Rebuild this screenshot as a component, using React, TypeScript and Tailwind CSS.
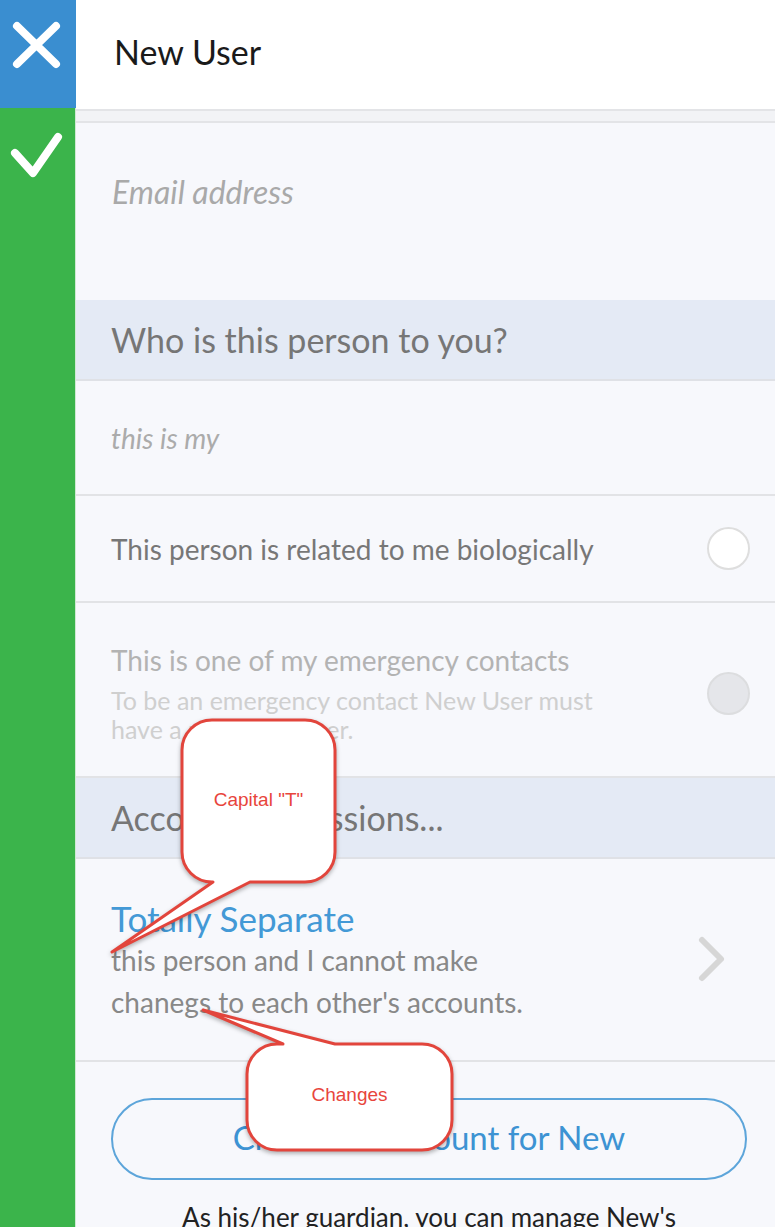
import React from "react";

const SectionHeader = ({ children }: { children: React.ReactNode }) => (
  <div className="h-[81px] bg-[#e4eaf5] border-b-2 border-[#dfe1e6] flex items-center pl-[35px]">
    <h2 className="text-[34px] text-[#767676] leading-none">{children}</h2>
  </div>
);

const Radio = ({ disabled }: { disabled?: boolean }) => (
  <div
    className={
      disabled
        ? "w-[43px] h-[43px] rounded-full bg-[#e5e6ea] border-2 border-[#dcdddf] shrink-0"
        : "w-[43px] h-[43px] rounded-full bg-white border-2 border-[#dedede] shrink-0"
    }
  />
);

const Callouts = () => (
  <>
    <svg
      className="absolute left-0 top-0 pointer-events-none drop-shadow-[0_2px_2px_rgba(0,0,0,0.3)]"
      width="775"
      height="1227"
      viewBox="0 0 775 1227"
    >
      <path
        d="M 212 720 H 305 A 30 30 0 0 1 335 750 V 852 A 30 30 0 0 1 305 882 H 250 L 112 952 L 213 882 H 212 A 30 30 0 0 1 182 852 V 750 A 30 30 0 0 1 212 720 Z"
        fill="#fff"
        stroke="#e2453c"
        strokeWidth="3"
        strokeLinejoin="round"
      />
      <path
        d="M 277 1044 H 283 L 203 1010 L 335 1044 H 422 A 30 30 0 0 1 452 1074 V 1120 A 30 30 0 0 1 422 1150 H 277 A 30 30 0 0 1 247 1120 V 1074 A 30 30 0 0 1 277 1044 Z"
        fill="#fff"
        stroke="#e2453c"
        strokeWidth="3"
        strokeLinejoin="round"
      />
    </svg>
    <div className="absolute left-[182px] top-[788px] w-[153px] text-center text-[19px] leading-[24px] text-[#e8453c] font-['Liberation_Sans',Arial,sans-serif]">
      Capital "T"
    </div>
    <div className="absolute left-[247px] top-[1083px] w-[205px] text-center text-[19px] leading-[24px] text-[#e8453c] font-['Liberation_Sans',Arial,sans-serif]">
      Changes
    </div>
  </>
);

export default function App() {
  return (
    <div className="relative flex w-[775px] h-[1227px] overflow-hidden font-['Lato',sans-serif]">
      <aside className="w-[76px] shrink-0 flex flex-col">
        <div className="h-[108px] bg-[#3a8ed0]">
          <svg width="76" height="108" viewBox="0 0 76 108">
            <path d="M17 26 L56 64 M56 26 L17 64" stroke="#fff" strokeWidth="8" strokeLinecap="round" fill="none" />
          </svg>
        </div>
        <div className="flex-1 bg-[#3bb44b] border-r border-[#cfe9d3]">
          <svg className="mt-[20px]" width="76" height="60" viewBox="0 0 76 60">
            <path d="M15 25 L33 45 L58 9" stroke="#fff" strokeWidth="8" strokeLinecap="round" strokeLinejoin="round" fill="none" />
          </svg>
        </div>
      </aside>

      <main className="flex-1 bg-[#f7f8fc] overflow-hidden">
        <header className="h-[111px] bg-white border-b-2 border-[#e3e4e7] flex items-center pl-[38px] pb-[6px]">
          <h1 className="text-[34px] text-[#1a1a1a] leading-none">New User</h1>
        </header>
        <div className="h-[12px] bg-[#f2f3f6] border-b-2 border-[#e3e4e7]" />

        <div className="h-[177px] pl-[36px] pt-[50px]">
          <p className="text-[32px] italic text-[#a9a9a9] leading-[38px]">Email address</p>
        </div>

        <SectionHeader>Who is this person to you?</SectionHeader>

        <div className="h-[115px] border-b-2 border-[#e2e3e6] flex items-center pl-[35px]">
          <p className="text-[28px] italic text-[#ababab]">this is my</p>
        </div>

        <div className="h-[107px] border-b-2 border-[#e2e3e6] flex items-center justify-between pl-[35px] pr-[25px]">
          <p className="text-[28px] text-[#777]">This person is related to me biologically</p>
          <Radio />
        </div>

        <div className="h-[175px] border-b-2 border-[#e2e3e6] flex items-center justify-between pl-[35px] pr-[25px] pt-[8px]">
          <div>
            <p className="text-[28px] leading-[32px] text-[#b3b3b3]">This is one of my emergency contacts</p>
            <p className="mt-[10px] text-[25px] leading-[29px] text-[#cfcfcf] w-[500px]">
              To be an emergency contact New User must have a phone number.
            </p>
          </div>
          <Radio disabled />
        </div>

        <SectionHeader>Account permissions...</SectionHeader>

        <div className="h-[203px] border-b-2 border-[#e2e3e6] flex items-center justify-between pl-[35px] pr-[48px]">
          <div>
            <h3 className="text-[35px] leading-[42px] text-[#4399d6]">Totally Separate</h3>
            <p className="text-[28px] leading-[42px] text-[#888] w-[430px]">
              this person and I cannot make chanegs to each other's accounts.
            </p>
          </div>
          <svg width="30" height="50" viewBox="0 0 30 50">
            <path d="M5 5 L24 24 L5 43" stroke="#d6d6d6" strokeWidth="6" strokeLinecap="round" strokeLinejoin="round" fill="none" />
          </svg>
        </div>

        <div className="pt-[36px] pl-[35px] pr-[28px]">
          <button className="w-full h-[82px] rounded-full border-2 border-[#5da5da] text-[33px] text-[#3d93d3] flex items-center justify-center pb-[2px]">
            Create an Account for New
          </button>
          <p className="mt-[22px] text-center text-[26px] leading-[30px] text-[#222]">
            As his/her guardian, you can manage New's
          </p>
        </div>
      </main>

      <Callouts />
    </div>
  );
}
